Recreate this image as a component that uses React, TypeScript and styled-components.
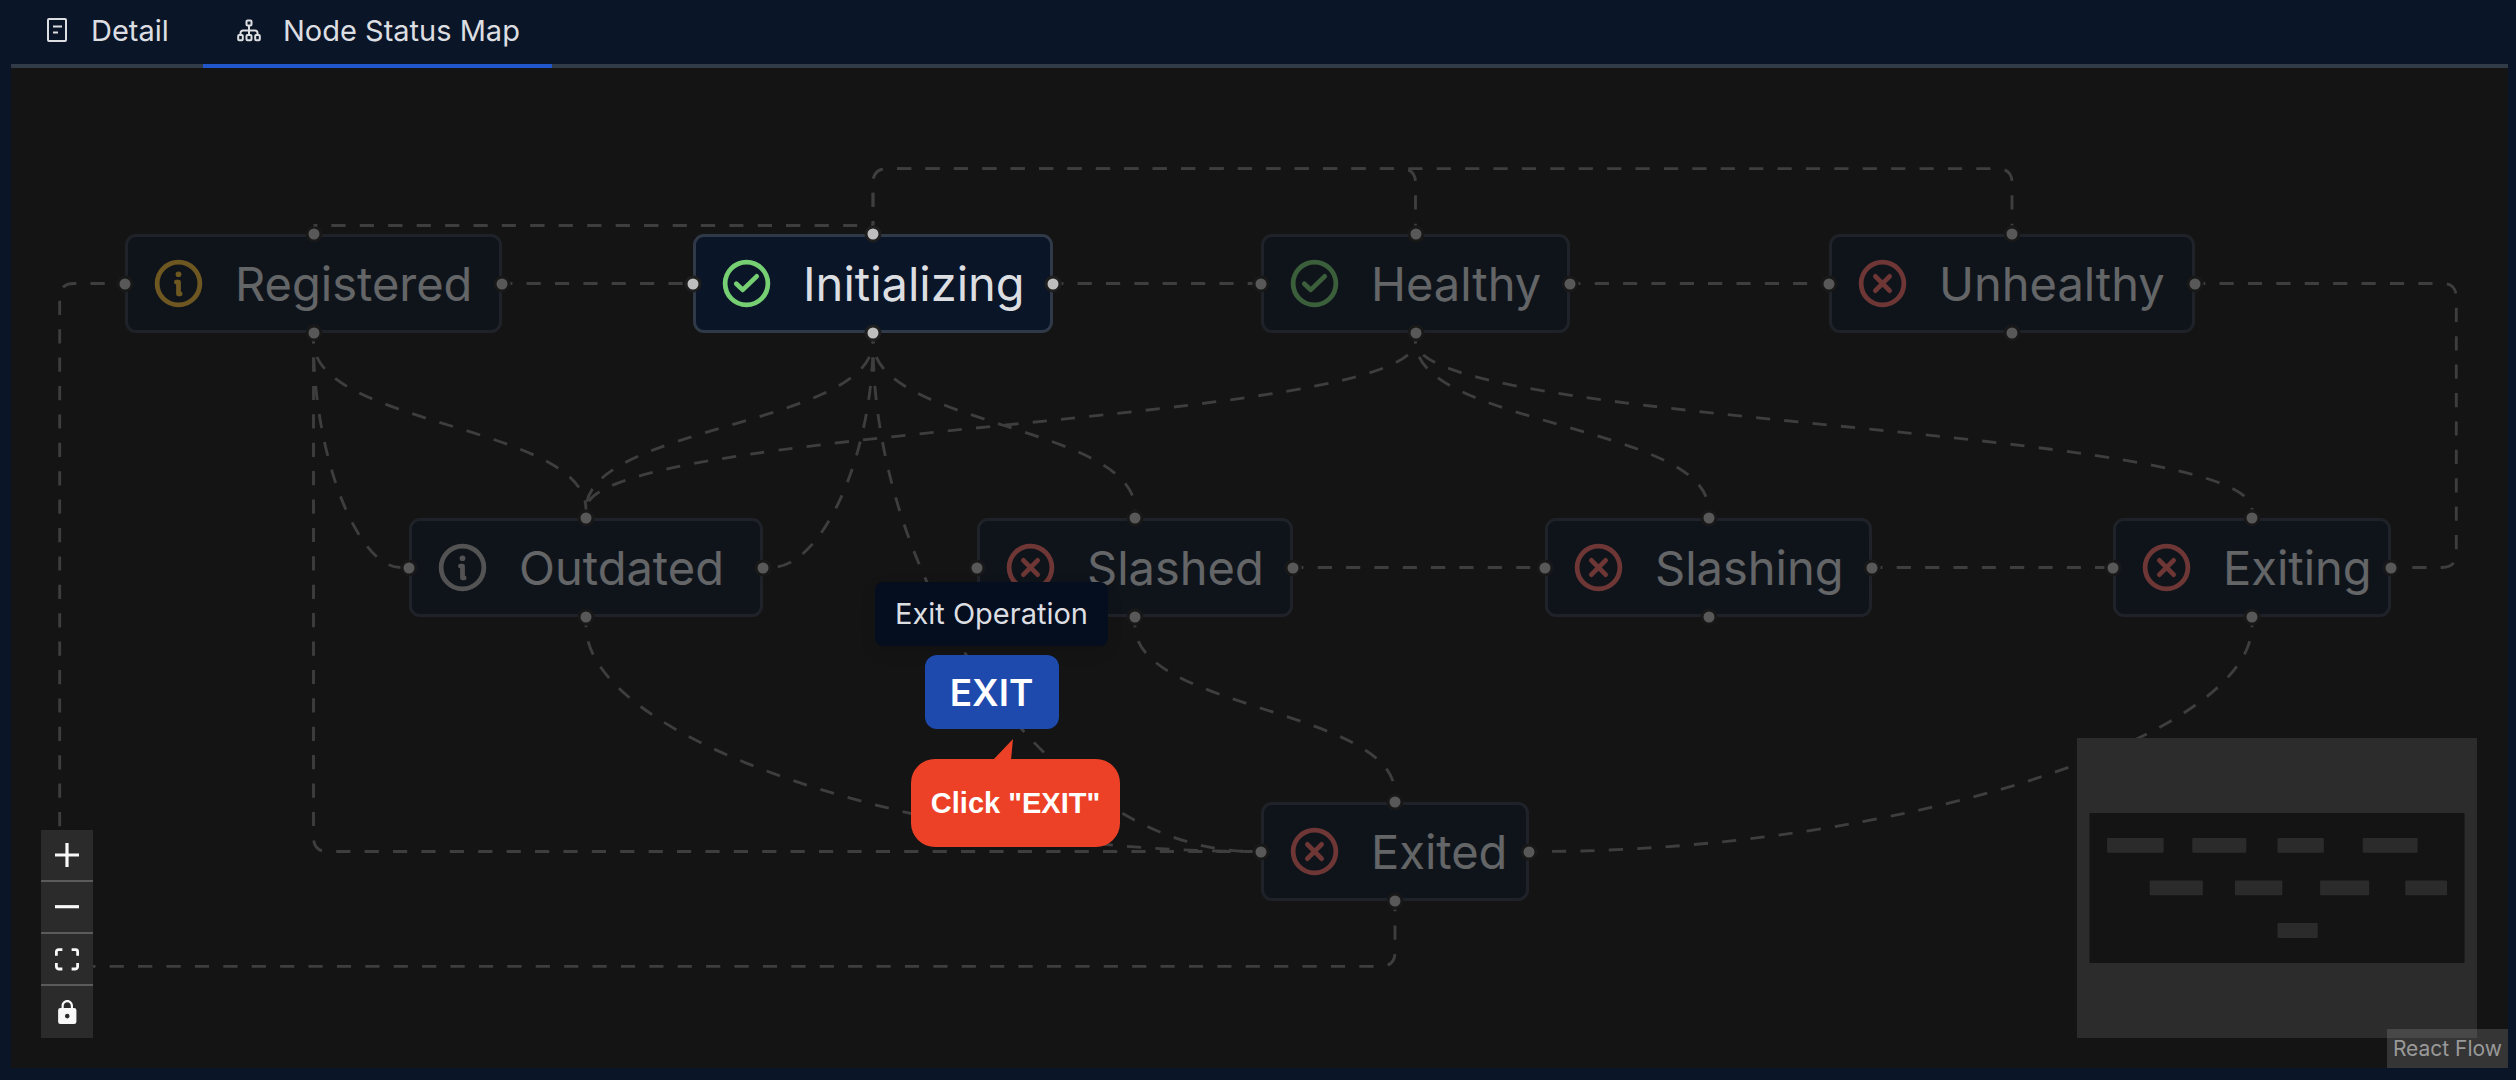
import React from "react";
import styled, { createGlobalStyle } from "styled-components";

/* ---------- theme ---------- */

const color = {
  page: "#0a1627",
  line: "#313a47",
  accent: "#2257cb",
  canvas: "#141414",
  edge: "#3e3e3e",
  text: "#dcdee2",
  ok: "#76cf73",
  warn: "#f5bd35",
  idle: "#b2b2b2",
  bad: "#f56a67",
};

const GlobalStyle = createGlobalStyle`
  * { box-sizing: border-box; }
  body {
    margin: 0;
    background: ${color.page};
    color: ${color.text};
    font-family: Inter, "Liberation Sans", sans-serif;
  }
  button { font: inherit; border: 0; padding: 0; cursor: pointer; }
`;

/* ---------- graph model ---------- */

type Status = "ok" | "warn" | "idle" | "bad";
type Side = "top" | "right" | "bottom" | "left";
type Point = { x: number; y: number };

interface StatusNode {
  id: string;
  status: Status;
  x: number;
  y: number;
  width: number;
  active?: boolean;
}

interface Edge {
  from: [string, Side];
  to: [string, Side];
  kind?: "bezier" | "step";
}

const ZOOM = 2.84;
const NODE_HEIGHT = 99;
const HANDLE = 17;

const nodes: StatusNode[] = [
  { id: "Registered", status: "warn", x: 114, y: 166, width: 377 },
  { id: "Initializing", status: "ok", x: 682, y: 166, width: 360, active: true },
  { id: "Healthy", status: "ok", x: 1250, y: 166, width: 309 },
  { id: "Unhealthy", status: "bad", x: 1818, y: 166, width: 366 },
  { id: "Outdated", status: "idle", x: 398, y: 450, width: 354 },
  { id: "Slashed", status: "bad", x: 966, y: 450, width: 316 },
  { id: "Slashing", status: "bad", x: 1534, y: 450, width: 327 },
  { id: "Exiting", status: "bad", x: 2102, y: 450, width: 278 },
  { id: "Exited", status: "bad", x: 1250, y: 734, width: 268 },
];

const edges: Edge[] = [
  { from: ["Registered", "right"], to: ["Initializing", "left"] },
  { from: ["Initializing", "right"], to: ["Healthy", "left"] },
  { from: ["Healthy", "right"], to: ["Unhealthy", "left"] },
  { from: ["Slashed", "right"], to: ["Slashing", "left"] },
  { from: ["Slashing", "right"], to: ["Exiting", "left"] },
  { from: ["Registered", "bottom"], to: ["Outdated", "top"] },
  { from: ["Registered", "bottom"], to: ["Outdated", "left"] },
  { from: ["Initializing", "bottom"], to: ["Outdated", "top"] },
  { from: ["Initializing", "bottom"], to: ["Outdated", "right"] },
  { from: ["Initializing", "bottom"], to: ["Slashed", "top"] },
  { from: ["Initializing", "bottom"], to: ["Exited", "left"] },
  { from: ["Healthy", "bottom"], to: ["Outdated", "top"] },
  { from: ["Healthy", "bottom"], to: ["Slashing", "top"] },
  { from: ["Healthy", "bottom"], to: ["Exiting", "top"] },
  { from: ["Outdated", "bottom"], to: ["Exited", "left"] },
  { from: ["Slashed", "bottom"], to: ["Exited", "top"] },
  { from: ["Exiting", "bottom"], to: ["Exited", "right"] },
  { from: ["Initializing", "top"], to: ["Registered", "top"] },
  { from: ["Healthy", "top"], to: ["Initializing", "top"], kind: "step" },
  { from: ["Unhealthy", "top"], to: ["Initializing", "top"], kind: "step" },
  { from: ["Unhealthy", "right"], to: ["Exiting", "right"], kind: "step" },
  { from: ["Registered", "bottom"], to: ["Exited", "left"], kind: "step" },
  { from: ["Exited", "bottom"], to: ["Registered", "left"], kind: "step" },
];

const direction: Record<Side, Point> = {
  top: { x: 0, y: -1 },
  right: { x: 1, y: 0 },
  bottom: { x: 0, y: 1 },
  left: { x: -1, y: 0 },
};

function anchor([id, side]: [string, Side]): Point {
  const n = nodes.find((item) => item.id === id)!;
  const d = direction[side];
  return {
    x: n.x + n.width / 2 + d.x * (n.width / 2 + HANDLE / 2),
    y: n.y + NODE_HEIGHT / 2 + d.y * (NODE_HEIGHT / 2 + HANDLE / 2),
  };
}

function control(a: Point, side: Side, b: Point): Point {
  const d = direction[side];
  const distance = (b.x - a.x) * d.x + (b.y - a.y) * d.y;
  const reach =
    distance >= 0 ? distance / 2 : 0.25 * 25 * Math.sqrt(-distance / ZOOM) * ZOOM;
  return { x: a.x + d.x * reach, y: a.y + d.y * reach };
}

function roundedPath(points: Point[]): string {
  const radius = 5 * ZOOM;
  const toward = (p: Point, q: Point) => {
    const length = Math.hypot(q.x - p.x, q.y - p.y);
    const r = Math.min(radius, length / 2);
    return `${p.x + ((q.x - p.x) / length) * r},${p.y + ((q.y - p.y) / length) * r}`;
  };
  return points
    .map((p, i) => {
      if (i === 0) return `M${p.x},${p.y}`;
      if (i === points.length - 1) return `L${p.x},${p.y}`;
      return `L${toward(p, points[i - 1])} Q${p.x},${p.y} ${toward(p, points[i + 1])}`;
    })
    .join(" ");
}

function edgePath({ from, to, kind }: Edge): string {
  const a = anchor(from);
  const b = anchor(to);
  if (kind !== "step") {
    const c1 = control(a, from[1], b);
    const c2 = control(b, to[1], a);
    return `M${a.x},${a.y} C${c1.x},${c1.y} ${c2.x},${c2.y} ${b.x},${b.y}`;
  }
  const gap = 20 * ZOOM;
  if (from[1] === to[1]) {
    if (from[1] === "top") {
      const y = Math.min(a.y, b.y) - gap;
      return roundedPath([a, { x: a.x, y }, { x: b.x, y }, b]);
    }
    const x = Math.max(a.x, b.x) + gap;
    return roundedPath([a, { x, y: a.y }, { x, y: b.y }, b]);
  }
  if (b.y > a.y) return roundedPath([a, { x: a.x, y: b.y }, b]);
  const x = b.x - gap;
  const y = a.y + gap;
  return roundedPath([a, { x: a.x, y }, { x, y }, { x, y: b.y }, b]);
}

/* ---------- styled parts ---------- */

const Page = styled.div`
  display: flex;
  flex-direction: column;
  height: 100vh;
  padding: 0 8px 12px 11px;
`;

const Tabs = styled.nav`
  display: flex;
  flex: none;
  box-shadow: inset 0 -4px ${color.line};
`;

const Tab = styled.button<{ $active?: boolean }>`
  display: flex;
  align-items: center;
  gap: 20px;
  min-width: 192px;
  height: 68px;
  padding: 0 32px 8px;
  background: none;
  color: ${color.text};
  box-shadow: ${(p) => (p.$active ? `inset 0 -4px ${color.accent}` : "none")};
  && {
    font-size: 29px;
  }
`;

const Canvas = styled.main`
  position: relative;
  flex: 1;
  min-height: 0;
  overflow: hidden;
  background: ${color.canvas};
`;

const EdgeLayer = styled.svg`
  position: absolute;
  inset: 0;
  width: 100%;
  height: 100%;

  path {
    fill: none;
    stroke: ${color.edge};
    stroke-width: ${ZOOM};
    stroke-dasharray: ${5 * ZOOM};
    stroke-dashoffset: 12.4;
  }
`;

const NodeBox = styled.article<{ $active?: boolean }>`
  position: absolute;
  display: flex;
  align-items: center;
  gap: 28px;
  height: ${NODE_HEIGHT}px;
  padding-left: 22px;
  border: 3px solid #303947;
  border-radius: 11px;
  background: ${color.page};
  font-size: 47px;
  line-height: 1;
  white-space: nowrap;
  opacity: ${(p) => (p.$active ? 1 : 0.4)};
`;

const Handle = styled.i<{ $side: Side }>`
  position: absolute;
  left: ${(p) => (p.$side === "left" ? "-3px" : p.$side === "right" ? "calc(100% + 3px)" : "50%")};
  top: ${(p) => (p.$side === "top" ? "-3px" : p.$side === "bottom" ? "calc(100% + 3px)" : "50%")};
  width: ${HANDLE}px;
  height: ${HANDLE}px;
  border: 3px solid #1e1e1e;
  border-radius: 50%;
  background: #bebebe;
  transform: translate(-50%, -50%);
`;

const Operation = styled.div`
  position: absolute;
  left: 864px;
  top: 514px;
  display: flex;
  flex-direction: column;
  align-items: center;
`;

const Tooltip = styled.div`
  padding: 0 20px;
  border-radius: 8px;
  background: #040e1f;
  box-shadow: 0 6px 16px rgba(0, 0, 0, 0.1);
  font-size: 29px;
  line-height: 64px;
  white-space: nowrap;
`;

const ExitButton = styled.button`
  width: 134px;
  height: 74px;
  margin-top: 9px;
  border-radius: 12px;
  background: #1e4aad;
  color: #fff;
  && {
    font-size: 37px;
    font-weight: 600;
  }
`;

const Callout = styled.div`
  position: relative;
  margin: 30px -24px 0 24px;
  padding: 0 20px;
  border-radius: 24px;
  background: #ec4127;
  color: #fff;
  font: bold 29px/88px "Liberation Sans", Arial, sans-serif;
  white-space: nowrap;
`;

const CalloutTail = styled.svg`
  position: absolute;
  left: 82px;
  bottom: calc(100% - 1px);
  fill: #ec4127;
`;

const Controls = styled.div`
  position: absolute;
  left: 30px;
  bottom: 30px;
  display: flex;
  flex-direction: column;
`;

const ControlButton = styled.button`
  display: grid;
  place-items: center;
  width: 52px;
  height: 52px;
  background: #2b2b2b;
  color: #f8f8f8;

  &:not(:last-child) {
    border-bottom: 2px solid #5b5b5b;
  }
`;

const MiniMap = styled.svg`
  position: absolute;
  right: 31px;
  bottom: 30px;
  width: 400px;
  height: 300px;
  background: ${color.canvas};
`;

const Attribution = styled.a`
  position: absolute;
  right: 0;
  bottom: 0;
  padding: 0 6px;
  background: rgba(150, 150, 150, 0.25);
  color: #999;
  font-size: 21px;
  line-height: 39px;
  text-decoration: none;
`;

/* ---------- drawings ---------- */

const infoGlyph = (
  <>
    <path d="M11.1 11.4H12V16.4H12.7" />
    <circle cx="12" cy="8.1" r="1.2" fill="currentColor" stroke="none" />
  </>
);

const glyphs: Record<Status, React.ReactNode> = {
  ok: <path d="M7.7 12.1 10.4 14.7 16.3 9" />,
  bad: <path d="m9 9 6 6m0-6-6 6" />,
  warn: infoGlyph,
  idle: infoGlyph,
};

const StatusIcon = ({ status }: { status: Status }) => (
  <svg
    width="57"
    height="57"
    viewBox="0 0 24 24"
    fill="none"
    stroke="currentColor"
    strokeWidth="2"
    strokeLinecap="round"
    strokeLinejoin="round"
    color={color[status]}
    aria-hidden="true"
  >
    <circle cx="12" cy="12" r="9" />
    {glyphs[status]}
  </svg>
);

const DetailIcon = () => (
  <svg width="28" height="28" viewBox="0 0 28 28" fill="none" stroke="currentColor" strokeWidth="2" strokeLinejoin="round" aria-hidden="true">
    <rect x="5" y="3" width="18" height="22" rx="1" />
    <path d="M10 10.5h9M10 16.5h5" />
  </svg>
);

const TreeIcon = () => (
  <svg width="28" height="28" viewBox="0 0 28 28" fill="none" stroke="currentColor" strokeWidth="2" aria-hidden="true">
    <rect x="11.5" y="4.5" width="5" height="5" rx="1" />
    <rect x="3.2" y="19" width="4.6" height="5.2" rx="1" />
    <rect x="11.5" y="19" width="5" height="5.2" rx="1" />
    <rect x="20.2" y="19" width="4.6" height="5.2" rx="1" />
    <path d="M14 9.5V19M5.5 19v-2a2.5 2.5 0 0 1 2.5-2.5h12a2.5 2.5 0 0 1 2.5 2.5v2" />
  </svg>
);

const PlusIcon = () => (
  <svg width="24" height="24" viewBox="0 0 32 32" fill="currentColor" aria-hidden="true">
    <path d="M32 18.133H18.133V32h-4.266V18.133H0v-4.266h13.867V0h4.266v13.867H32z" />
  </svg>
);

const MinusIcon = () => (
  <svg width="24" height="4" viewBox="0 0 32 5" fill="currentColor" aria-hidden="true">
    <path d="M0 0h32v4.2H0z" />
  </svg>
);

const FitIcon = () => (
  <svg width="24" height="23" viewBox="0 0 32 30" fill="currentColor" aria-hidden="true">
    <path d="M3.692 4.63c0-.53.4-.938.939-.938h5.215V0H4.708C2.13 0 0 2.054 0 4.63v5.216h3.692V4.631zM27.354 0h-5.2v3.692h5.17c.53 0 .984.4.984.939v5.215H32V4.631A4.624 4.624 0 0027.354 0zm.954 24.83c0 .532-.4.94-.939.94h-5.215v3.768h5.215c2.577 0 4.631-2.13 4.631-4.707v-5.139h-3.692v5.139zm-23.677.94c-.531 0-.939-.4-.939-.94v-5.138H0v5.139c0 2.577 2.13 4.707 4.708 4.707h5.138V25.77H4.631z" />
  </svg>
);

const LockIcon = () => (
  <svg width="19" height="24" viewBox="0 0 25 32" fill="currentColor" aria-hidden="true">
    <path d="M21.333 10.667H19.81V7.619C19.81 3.429 16.38 0 12.19 0 8 0 4.571 3.429 4.571 7.619v3.048H3.048A3.056 3.056 0 000 13.714v15.238A3.056 3.056 0 003.048 32h18.285a3.056 3.056 0 003.048-3.048V13.714a3.056 3.056 0 00-3.048-3.047zM12.19 24.533a3.056 3.056 0 01-3.047-3.047 3.056 3.056 0 013.047-3.048 3.056 3.056 0 013.048 3.048 3.056 3.056 0 01-3.048 3.047zm4.724-13.866H7.467V7.619c0-2.59 2.133-4.724 4.723-4.724 2.591 0 4.724 2.133 4.724 4.724v3.048z" />
  </svg>
);

/* ---------- app ---------- */

const sides: Side[] = ["top", "right", "bottom", "left"];

export default function App() {
  return (
    <>
      <GlobalStyle />
      <Page>
        <Tabs>
          <Tab type="button">
            <DetailIcon />
            Detail
          </Tab>
          <Tab type="button" $active>
            <TreeIcon />
            Node Status Map
          </Tab>
        </Tabs>
        <Canvas>
          <EdgeLayer aria-hidden="true">
            {edges.map((edge, i) => (
              <path key={i} d={edgePath(edge)} />
            ))}
          </EdgeLayer>
          {nodes.map((n) => (
            <NodeBox key={n.id} $active={n.active} style={{ left: n.x, top: n.y, width: n.width }}>
              <StatusIcon status={n.status} />
              {n.id}
              {sides.map((side) => (
                <Handle key={side} $side={side} />
              ))}
            </NodeBox>
          ))}
          <Operation>
            <Tooltip role="tooltip">Exit Operation</Tooltip>
            <ExitButton type="button">EXIT</ExitButton>
            <Callout>
              <CalloutTail width="20" height="21" viewBox="0 0 20 21" aria-hidden="true">
                <path d="M0 21 20 0 18 21z" />
              </CalloutTail>
              Click "EXIT"
            </Callout>
          </Operation>
          <Controls>
            <ControlButton type="button" aria-label="Zoom in"><PlusIcon /></ControlButton>
            <ControlButton type="button" aria-label="Zoom out"><MinusIcon /></ControlButton>
            <ControlButton type="button" aria-label="Fit view"><FitIcon /></ControlButton>
            <ControlButton type="button" aria-label="Lock"><LockIcon /></ControlButton>
          </Controls>
          <MiniMap viewBox="0 0 400 300" aria-hidden="true">
            {nodes.map((n) => (
              <rect
                key={n.id}
                x={13 + n.x * 0.15}
                y={75 + n.y * 0.15}
                width={n.width * 0.15}
                height={NODE_HEIGHT * 0.15}
                rx="1"
                fill="#2b2b2b"
              />
            ))}
            <path d="M0 0H400V300H0zM12.5 75V225H387.5V75z" fill="rgba(60,60,60,.6)" fillRule="evenodd" />
          </MiniMap>
          <Attribution href="https://reactflow.dev">React Flow</Attribution>
        </Canvas>
      </Page>
    </>
  );
}
